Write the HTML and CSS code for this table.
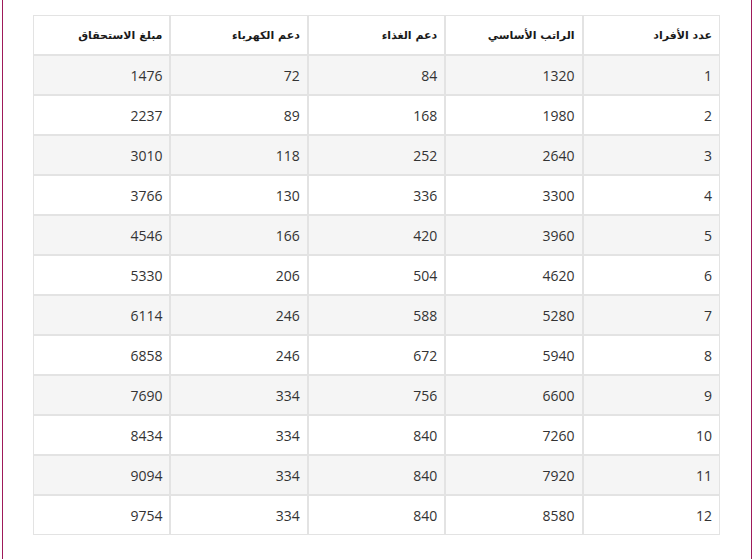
FILE: index.html
```html
<!DOCTYPE html>
<html lang="ar">
<head>
<meta charset="utf-8">
<link rel="stylesheet" href="styles.css">
</head>
<body>
<div class="page">
  <table class="grid" dir="rtl">
    <thead>
      <tr><th>عدد الأفراد</th><th>الراتب الأساسي</th><th>دعم الغذاء</th><th>دعم الكهرباء</th><th>مبلغ الاستحقاق</th></tr>
    </thead>
    <tbody>
      <tr><td>1</td><td>1320</td><td>84</td><td>72</td><td>1476</td></tr>
      <tr><td>2</td><td>1980</td><td>168</td><td>89</td><td>2237</td></tr>
      <tr><td>3</td><td>2640</td><td>252</td><td>118</td><td>3010</td></tr>
      <tr><td>4</td><td>3300</td><td>336</td><td>130</td><td>3766</td></tr>
      <tr><td>5</td><td>3960</td><td>420</td><td>166</td><td>4546</td></tr>
      <tr><td>6</td><td>4620</td><td>504</td><td>206</td><td>5330</td></tr>
      <tr><td>7</td><td>5280</td><td>588</td><td>246</td><td>6114</td></tr>
      <tr><td>8</td><td>5940</td><td>672</td><td>246</td><td>6858</td></tr>
      <tr><td>9</td><td>6600</td><td>756</td><td>334</td><td>7690</td></tr>
      <tr><td>10</td><td>7260</td><td>840</td><td>334</td><td>8434</td></tr>
      <tr><td>11</td><td>7920</td><td>840</td><td>334</td><td>9094</td></tr>
      <tr><td>12</td><td>8580</td><td>840</td><td>334</td><td>9754</td></tr>
    </tbody>
  </table>
</div>
</body>
</html>
```
FILE: styles.css
```css
html, body {
  margin: 0;
  padding: 0;
  background: #fff;
}
body {
  font-family: "Open Sans", "DejaVu Sans", sans-serif;
  color: #333;
}
.page {
  margin-left: 2px;
  width: 750px;
  height: 559px;
  border-left: 1px solid #9e1a5a;
  border-right: 1px solid #9e1a5a;
  padding: 15px 30px 0 30px;
  box-sizing: border-box;
}
.grid {
  width: 687px;
  border-collapse: separate;
  border-spacing: 0;
  table-layout: fixed;
}
.grid th, .grid td {
  border: 1px solid #e3e3e3;
  height: 38px;
  padding: 0 7px;
  text-align: right;
  vertical-align: middle;
}
.grid th {
  font-family: "DejaVu Sans", sans-serif;
  font-size: 11px;
  font-weight: bold;
  color: #1a1a1a;
}
.grid td {
  font-size: 14px;
  color: #333;
}
.grid tbody tr:nth-child(odd) td {
  background: #f5f5f5;
}
```
